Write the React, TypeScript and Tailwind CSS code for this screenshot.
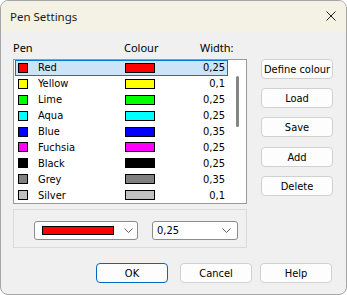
import React from "react";

const pens = [
  { name: "Red", color: "#ff0000", width: "0,25" },
  { name: "Yellow", color: "#ffff00", width: "0,1" },
  { name: "Lime", color: "#00ff00", width: "0,25" },
  { name: "Aqua", color: "#00ffff", width: "0,25" },
  { name: "Blue", color: "#0000ff", width: "0,35" },
  { name: "Fuchsia", color: "#ff00ff", width: "0,25" },
  { name: "Black", color: "#000000", width: "0,25" },
  { name: "Grey", color: "#808080", width: "0,35" },
  { name: "Silver", color: "#c0c0c0", width: "0,1" },
];

function Chevron() {
  return (
    <svg width="9" height="5" viewBox="0 0 9 5" className="shrink-0">
      <polyline points="0.5,0.5 4.5,4.5 8.5,0.5" fill="none" stroke="#5f5f5f" strokeWidth="1" />
    </svg>
  );
}

function Btn({ label, primary }: { label: string; primary?: boolean }) {
  return (
    <div
      className={
        "w-[72px] h-[20px] flex items-center justify-center rounded-[4px] bg-[#fdfdfd] text-[11px] leading-[13px] text-black " +
        (primary ? "border-[1.5px] border-[#0067c0]" : "border border-[#d0d0d0]")
      }
    >
      {label}
    </div>
  );
}

export default function App() {
  return (
    <div className="w-[347px] h-[295px] bg-white">
      <div className="w-[347px] h-[295px] rounded-[8px] border border-[#a6a6a6] overflow-hidden flex flex-col bg-[#f0f0f0] font-['DejaVu_Sans_Condensed','Liberation_Sans',sans-serif] text-black">
        {/* title bar */}
        <div className="h-[30px] shrink-0 bg-[#f4f2e4] flex items-center pl-[9px] pr-[10px]">
          <span className="font-['Noto_Sans',sans-serif] text-[11.5px] leading-[14px] text-[#1a1a1a] mt-[1px]">Pen Settings</span>
          <div className="flex-1" />
          <svg width="10" height="10" viewBox="0 0 10 10" className="mr-[0px]">
            <line x1="0.5" y1="0.5" x2="9.5" y2="9.5" stroke="#202020" strokeWidth="1" />
            <line x1="9.5" y1="0.5" x2="0.5" y2="9.5" stroke="#202020" strokeWidth="1" />
          </svg>
        </div>

        {/* body */}
        <div className="flex flex-col pl-[12px] pt-[9px]">
          <div className="flex">
            {/* left column */}
            <div className="w-[234px] flex flex-col">
              <div className="h-[19px] relative text-[11px] leading-[14px]">
                <span className="absolute left-0 top-[1px] font-['Noto_Sans',sans-serif] text-[11px]">Pen</span>
                <span className="absolute left-[111px] top-[1px] font-['Noto_Sans',sans-serif] text-[11px]">Colour</span>
                <span className="absolute left-[187px] top-[1px] font-['Noto_Sans',sans-serif] text-[11px]">Width:</span>
              </div>
              {/* list */}
              <div className="h-[145px] border border-[#9a9a9a] bg-white flex">
                <div className="w-[214px] pl-[1px] flex flex-col">
                  {pens.map((p, i) => (
                    <div
                      key={p.name}
                      className={
                        "h-[16px] flex items-center text-[11px] leading-[13px] " +
                        (i === 0 ? "bg-[#cce4f7] border border-[#0078d4]" : "border border-transparent")
                      }
                    >
                      <div className="ml-[2px] w-[10px] h-[10px] border border-black shrink-0" style={{ backgroundColor: p.color }} />
                      <div className="ml-[10px] w-[87px] text-[#000000]">{p.name}</div>
                      <div className="w-[30px] h-[10px] border border-black shrink-0" style={{ backgroundColor: p.color }} />
                      <div className="flex-1 text-right pr-[2px]">{p.width}</div>
                    </div>
                  ))}
                </div>
                <div className="flex-1 flex justify-center pt-[16px]">
                  <div className="w-[3px] h-[51px] rounded-full bg-[#858585]" />
                </div>
              </div>
              {/* group box */}
              <div className="mt-[5px] h-[39px] border border-[#dadada] flex items-start pt-[11px] pl-[20px]">
                <div className="w-[104px] h-[19px] bg-white border border-[#8c8c8c] rounded-[3px] flex items-center pl-[7px] pr-[4px]">
                  <div className="w-[72px] h-[9px] bg-[#ff0000] border border-black" />
                  <div className="flex-1" />
                  <Chevron />
                </div>
                <div className="ml-[14px] w-[86px] h-[19px] bg-white border border-[#8c8c8c] rounded-[3px] flex items-center pl-[4px] pr-[6px] text-[11px] leading-[13px]">
                  <span>0,25</span>
                  <div className="flex-1" />
                  <Chevron />
                </div>
              </div>
            </div>

            {/* right column */}
            <div className="ml-[14px] pt-[19px] flex flex-col">
              <Btn label="Define colour" />
              <div className="mt-[9px]"><Btn label="Load" /></div>
              <div className="mt-[9px]"><Btn label="Save" /></div>
              <div className="mt-[10px]"><Btn label="Add" /></div>
              <div className="mt-[9px]"><Btn label="Delete" /></div>
            </div>
          </div>

          {/* bottom buttons */}
          <div className="flex mt-[15px] ml-[83px]">
            <Btn label="OK" primary />
            <div className="ml-[12px]"><Btn label="Cancel" /></div>
            <div className="ml-[8px]"><Btn label="Help" /></div>
          </div>
        </div>
      </div>
    </div>
  );
}
